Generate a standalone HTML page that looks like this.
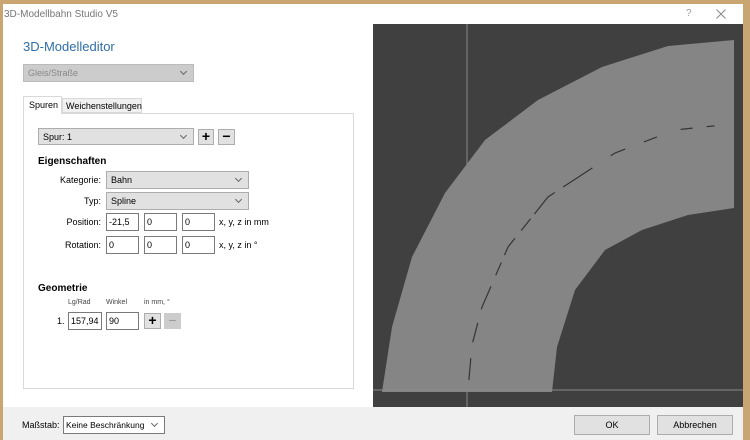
<!DOCTYPE html><html><head><style>
*{box-sizing:border-box;margin:0;padding:0}
body{width:750px;height:440px;overflow:hidden;background:#c9a572;font-family:"Liberation Sans",sans-serif;font-size:9px;color:#000;position:relative}
.a{position:absolute}
.dlg{left:3px;top:4px;width:740px;height:436px;background:#fff}
.cb{position:absolute;background:#e1e1e1;border:1px solid #adadad;padding:2px 4px;font-size:9px;line-height:12px}
.cb:after{content:"";position:absolute;right:7px;top:4px;width:4px;height:4px;border-right:1px solid #666;border-bottom:1px solid #666;transform:rotate(45deg)}
.in{position:absolute;background:#fff;border:1px solid #7a7a7a;padding:2px 2px;font-size:9px;line-height:12px;height:18px}
.btn{position:absolute;background:#e1e1e1;border:1px solid #adadad;text-align:center;font-weight:bold;font-size:14px;line-height:13px}
.lbl{position:absolute;font-size:9px;text-align:right}
</style></head><body>
<div class="a dlg"></div>
<div class="a" style="left:4px;top:9px;color:#777;font-size:10px">3D-Modellbahn Studio V5</div>
<div class="a" style="left:686px;top:8px;color:#999;font-size:10px">?</div>
<svg class="a" style="left:716px;top:9px" width="10" height="10"><path d="M0.5 0.5L9.5 9.5M9.5 0.5L0.5 9.5" stroke="#888" stroke-width="1"/></svg>
<div class="a" style="left:23px;top:39px;color:#2f6ea8;font-size:13px">3D-Modelleditor</div>
<div class="cb" style="left:23px;top:64px;width:171px;height:18px;background:#ccc;border-color:#bbb;color:#888">Gleis/Straße</div>
<div class="a" style="left:23px;top:113px;width:331px;height:276px;border:1px solid #d9d9d9;background:#fff"></div>
<div class="a" style="left:23px;top:96px;width:39px;height:18px;border:1px solid #d9d9d9;border-bottom:none;background:#fff;padding:3px 0 0 5px">Spuren</div>
<div class="a" style="left:62px;top:98px;width:80px;height:15px;border:1px solid #d9d9d9;background:#f0f0f0;padding:2px 0 0 3px">Weichenstellungen</div>
<div class="cb" style="left:38px;top:128px;width:156px;height:17px">Spur: 1</div>
<div class="btn" style="left:198px;top:129px;width:16px;height:16px">+</div>
<div class="btn" style="left:218px;top:129px;width:17px;height:16px">−</div>
<div class="a" style="left:38px;top:156px;font-weight:bold;font-size:10px">Eigenschaften</div>
<div class="lbl" style="left:40px;width:61px;top:175px">Kategorie:</div>
<div class="cb" style="left:106px;top:171px;width:143px;height:18px">Bahn</div>
<div class="lbl" style="left:40px;width:61px;top:196px">Typ:</div>
<div class="cb" style="left:106px;top:192px;width:143px;height:18px">Spline</div>
<div class="lbl" style="left:40px;width:61px;top:217px">Position:</div>
<div class="in" style="left:106px;top:213px;width:33px">-21,5</div>
<div class="in" style="left:144px;top:213px;width:33px">0</div>
<div class="in" style="left:182px;top:213px;width:33px">0</div>
<div class="a" style="left:219px;top:217px">x, y, z in mm</div>
<div class="lbl" style="left:40px;width:61px;top:240px">Rotation:</div>
<div class="in" style="left:106px;top:236px;width:33px">0</div>
<div class="in" style="left:144px;top:236px;width:33px">0</div>
<div class="in" style="left:182px;top:236px;width:33px">0</div>
<div class="a" style="left:219px;top:240px">x, y, z in °</div>
<div class="a" style="left:38px;top:283px;font-weight:bold;font-size:10px">Geometrie</div>
<div class="a" style="left:68px;top:299px;font-size:7px;color:#444">Lg/Rad</div>
<div class="a" style="left:106px;top:299px;font-size:7px;color:#444">Winkel</div>
<div class="a" style="left:144px;top:299px;font-size:7px;color:#444">in mm, °</div>
<div class="a" style="left:57px;top:316px">1.</div>
<div class="in" style="left:68px;top:312px;width:34px">157,94</div>
<div class="in" style="left:106px;top:312px;width:33px">90</div>
<div class="btn" style="left:144px;top:313px;width:17px;height:16px">+</div>
<div class="btn" style="left:164px;top:313px;width:17px;height:16px;background:#ccc;border-color:#ccc;color:#999;font-weight:normal">−</div>
<div class="a" style="left:3px;top:407px;width:740px;height:33px;background:#f0f0f0"></div>
<div class="a" style="left:22px;top:420px">Maßstab:</div>
<div class="cb" style="left:63px;top:416px;width:102px;height:18px;background:#fff;border-color:#7a7a7a;padding:2px 2px;font-size:8.5px">Keine Beschränkung</div>
<div class="a" style="left:574px;top:415px;width:76px;height:20px;background:#e1e1e1;border:1px solid #adadad;text-align:center;line-height:18px">OK</div>
<div class="a" style="left:657px;top:415px;width:76px;height:20px;background:#e1e1e1;border:1px solid #adadad;text-align:center;line-height:18px">Abbrechen</div>
<svg class="a" style="left:373px;top:24px" width="370" height="383" viewBox="373 24 370 383">
<rect x="373" y="24" width="370" height="383" fill="#404040"/>
<line x1="467" y1="24" x2="467" y2="407" stroke="#8a8a8a" stroke-width="1"/>
<path d="M382 392 L392 327 L412 257 L445 193 L485 140 L538 100 L602 67 L668 46 L734 40 L734 208 L688 215 L642 230 L605 250 L575 290 L557 347 L552 392 Z" fill="#858585"/>
<path d="M468 390 L472 345 L482 307 L508 247 L548 197 L615 153 L675 130 L732 124" fill="none" stroke="#353535" stroke-width="1.2" stroke-dasharray="0 10 22 6 0 10 20 14 25 12 14 8 20 10 15 6 30 10 25"/>
<line x1="373" y1="390" x2="743" y2="390" stroke="#8a8a8a" stroke-width="1"/>
</svg>
</body></html>
